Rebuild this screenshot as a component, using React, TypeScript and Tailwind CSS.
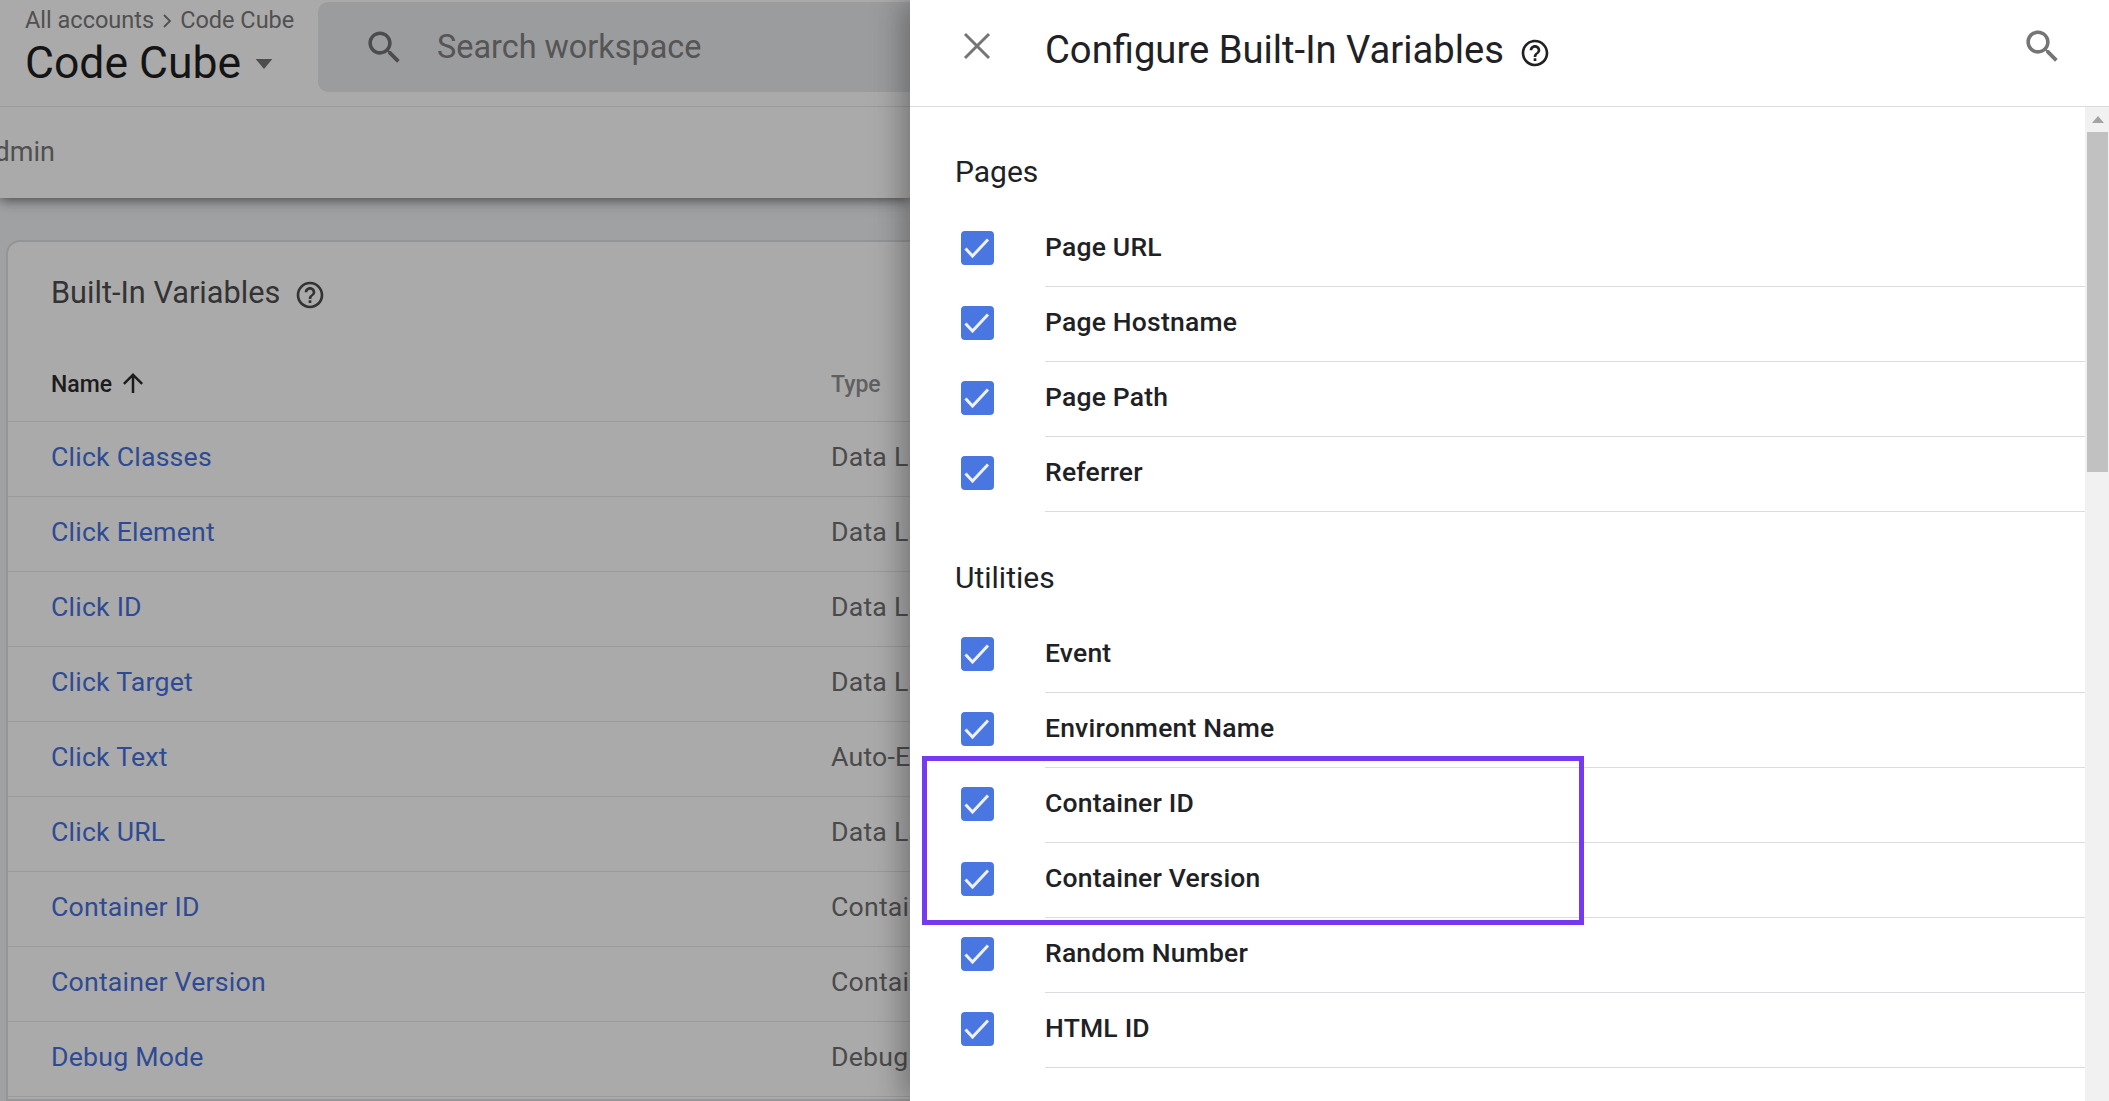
const helpPath =
  "M11 18h2v-2h-2v2zm1-16C6.48 2 2 6.48 2 12s4.48 10 10 10 10-4.48 10-10S17.52 2 12 2zm0 18c-4.41 0-8-3.59-8-8s3.59-8 8-8 8 3.59 8 8-3.59 8-8 8zm0-14c-2.21 0-4 1.79-4 4h2c0-1.1.9-2 2-2s2 .9 2 2c0 2-3 1.75-3 5h2c0-2.25 3-2.5 3-5 0-2.21-1.79-4-4-4z";
const searchPath =
  "M15.5 14h-.79l-.28-.27C15.41 12.59 16 11.11 16 9.5 16 5.91 13.09 3 9.5 3S3 5.91 3 9.5 5.91 16 9.5 16c1.61 0 3.09-.59 4.23-1.57l.27.28v.79l5 4.99L20.49 19l-4.99-5zm-6 0C7.01 14 5 11.99 5 9.5S7.01 5 9.5 5 14 7.01 14 9.5 11.99 14 9.5 14z";

const Icon = ({ d, className }: { d: string; className: string }) => (
  <svg viewBox="0 0 24 24" fill="currentColor" className={className}>
    <path d={d} />
  </svg>
);

const rows = [
  ["Click Classes", "Data Layer Variable"],
  ["Click Element", "Data Layer Variable"],
  ["Click ID", "Data Layer Variable"],
  ["Click Target", "Data Layer Variable"],
  ["Click Text", "Auto-Event Variable"],
  ["Click URL", "Data Layer Variable"],
  ["Container ID", "Container ID"],
  ["Container Version", "Container Version"],
  ["Debug Mode", "Debug Mode"],
];

const CheckRow = ({ label }: { label: string }) => (
  <div className="flex h-[75px] items-center">
    <div className="-mt-[3px] ml-[51px] flex h-[34px] w-[33px] shrink-0 items-center justify-center rounded-[4px] bg-[#4a76e1]">
      <svg viewBox="0 0 33 34" className="h-[34px] w-[33px]" fill="none" stroke="#eef1fa" strokeWidth="3">
        <path d="M4.5 17.5l7 7.5L27 8.5" />
      </svg>
    </div>
    <div className="ml-[51px] flex h-[75px] flex-1 items-center border-b-[1.5px] border-[#dadce0] text-[26.5px] leading-none font-medium tracking-[0.2px] text-[#202124]">
      <span className="-mt-[4px]">{label}</span>
    </div>
  </div>
);

export default function App() {
  return (
    <div className="flex h-screen w-full overflow-hidden bg-white font-['Roboto',sans-serif]">
      {/* dimmed page behind the drawer */}
      <div className="flex h-full w-[910px] shrink-0 flex-col overflow-hidden bg-[#9fa1a3]">
        <div className="relative z-10 shadow-[0_2px_12px_rgba(30,30,30,0.7)]">
          <div className="flex h-[107px] items-start border-b-[1.5px] border-[#9a9a9a] bg-[#aaaaaa] pl-[25px]">
            <div className="w-[293px] shrink-0">
              <div className="mt-[1px] flex h-[40px] items-center gap-[8px] text-[23.5px] whitespace-nowrap text-[#505050]">
                <span>All accounts</span>
                <svg viewBox="0 0 10 16" className="h-[16px] w-[10px]" fill="none" stroke="#505050" strokeWidth="1.8">
                  <path d="M2 2l6 6-6 6" />
                </svg>
                <span>Code Cube</span>
              </div>
              <div className="flex items-center text-[44.5px] leading-[44px] text-[#141414]">
                <span>Code Cube</span>
                <svg viewBox="0 0 20 12" className="ml-[14px] mt-[2px] h-[10px] w-[18px]" fill="#4d4d4d">
                  <path d="M0 0h20L10 12z" />
                </svg>
              </div>
            </div>
            <div className="mt-[2px] flex h-[90px] flex-1 items-center rounded-l-[10px] bg-[#9b9c9e] pl-[45px] text-[#555]">
              <Icon d={searchPath} className="h-[43px] w-[43px] text-[#4c4c4c]" />
              <span className="ml-[31px] text-[32.4px] whitespace-nowrap">Search workspace</span>
            </div>
          </div>
          <div className="flex h-[91px] items-center bg-[#aaaaaa] text-[27px] text-[#505050]">
            <span className="-ml-[23px]">Admin</span>
          </div>
        </div>

        <div className="-mr-[40px] ml-[6px] mt-[42px] flex-1 rounded-t-[14px] border-2 border-[#949596] bg-[#aaaaaa]">
          <div className="flex h-[104px] items-center gap-[14px] pl-[43px] text-[30.7px] text-[#333]">
            <span className="-mt-[1px]">Built-In Variables</span>
            <Icon d={helpPath} className="mt-[2px] h-[32px] w-[32px] text-[#333]" />
          </div>
          <div className="flex h-[76px] items-center border-b-[1.5px] border-[#9a9a9a] pl-[43px] text-[23px]">
            <div className="mt-[3px] flex w-[780px] shrink-0 items-center font-medium text-[#1c1c1c]">
              Name
              <svg viewBox="0 0 24 24" className="-mt-[4px] ml-[6px] h-[30px] w-[30px]" fill="currentColor">
                <path d="M4 12l1.41 1.41L11 7.83V20h2V7.83l5.58 5.59L20 12l-8-8-8 8z" />
              </svg>
            </div>
            <span className="mt-[3px] font-medium text-[#606060]">Type</span>
          </div>
          {rows.map((r) => (
            <div key={r[0]} className="flex h-[75px] items-center border-b-[1.5px] border-[#9a9a9a] pl-[43px] text-[26.7px] tracking-[0.2px]">
              <span className="-mt-[4px] w-[780px] shrink-0 text-[#2f4a94]">{r[0]}</span>
              <span className="-mt-[4px] w-[79px] overflow-hidden whitespace-nowrap text-[#4a4a4a]">{r[1]}</span>
            </div>
          ))}
        </div>
      </div>

      {/* drawer */}
      <div className="relative z-20 flex h-full flex-1 flex-col bg-white shadow-[-8px_0_28px_rgba(30,30,30,0.38)]">
        <div className="flex h-[107px] shrink-0 items-center border-b-[1.5px] border-[#dadce0] pl-[53px] pr-[45px]">
          <svg viewBox="0 0 28 28" className="-mt-[14px] h-[28px] w-[28px] text-[#757575]" stroke="currentColor" strokeWidth="3">
            <path d="M2 2l24 24M26 2L2 26" />
          </svg>
          <span className="-mt-[6px] ml-[54px] text-[38.2px] leading-none text-[#202124]">Configure Built-In Variables</span>
          <Icon d={helpPath} className="ml-[15px] -mt-[1px] h-[32px] w-[32px] text-[#202124]" />
          <div className="flex-1" />
          <Icon d={searchPath} className="-mt-[14px] h-[43px] w-[43px] text-[#757575]" />
        </div>

        <div className="flex min-h-0 flex-1">
          <div className="flex-1 overflow-hidden">
            <div className="flex h-[105px] items-end pb-[25px] pl-[45px] text-[30px] leading-none text-[#202124]">Pages</div>
            <CheckRow label="Page URL" />
            <CheckRow label="Page Hostname" />
            <CheckRow label="Page Path" />
            <CheckRow label="Referrer" />
            <div className="flex h-[106px] items-end pb-[25px] pl-[45px] text-[30px] leading-none text-[#202124]">Utilities</div>
            <CheckRow label="Event" />
            <CheckRow label="Environment Name" />
            <div className="relative">
              <CheckRow label="Container ID" />
              <CheckRow label="Container Version" />
              <div className="pointer-events-none absolute -top-[12px] left-[12px] h-[169px] w-[662px] border-[5px] border-[#7439f0]" />
            </div>
            <CheckRow label="Random Number" />
            <CheckRow label="HTML ID" />
          </div>
          {/* scrollbar */}
          <div className="flex w-[24px] shrink-0 flex-col items-end bg-[#f1f1f1]">
            <div className="flex h-[25px] w-full items-center justify-center pl-[2px]">
              <svg viewBox="0 0 12 7" className="h-[7px] w-[12px]" fill="#a3a3a3">
                <path d="M0 7L6 0l6 7z" />
              </svg>
            </div>
            <div className="mr-[1px] h-[340px] w-[21px] bg-[#c1c1c1]" />
          </div>
        </div>
      </div>
    </div>
  );
}
